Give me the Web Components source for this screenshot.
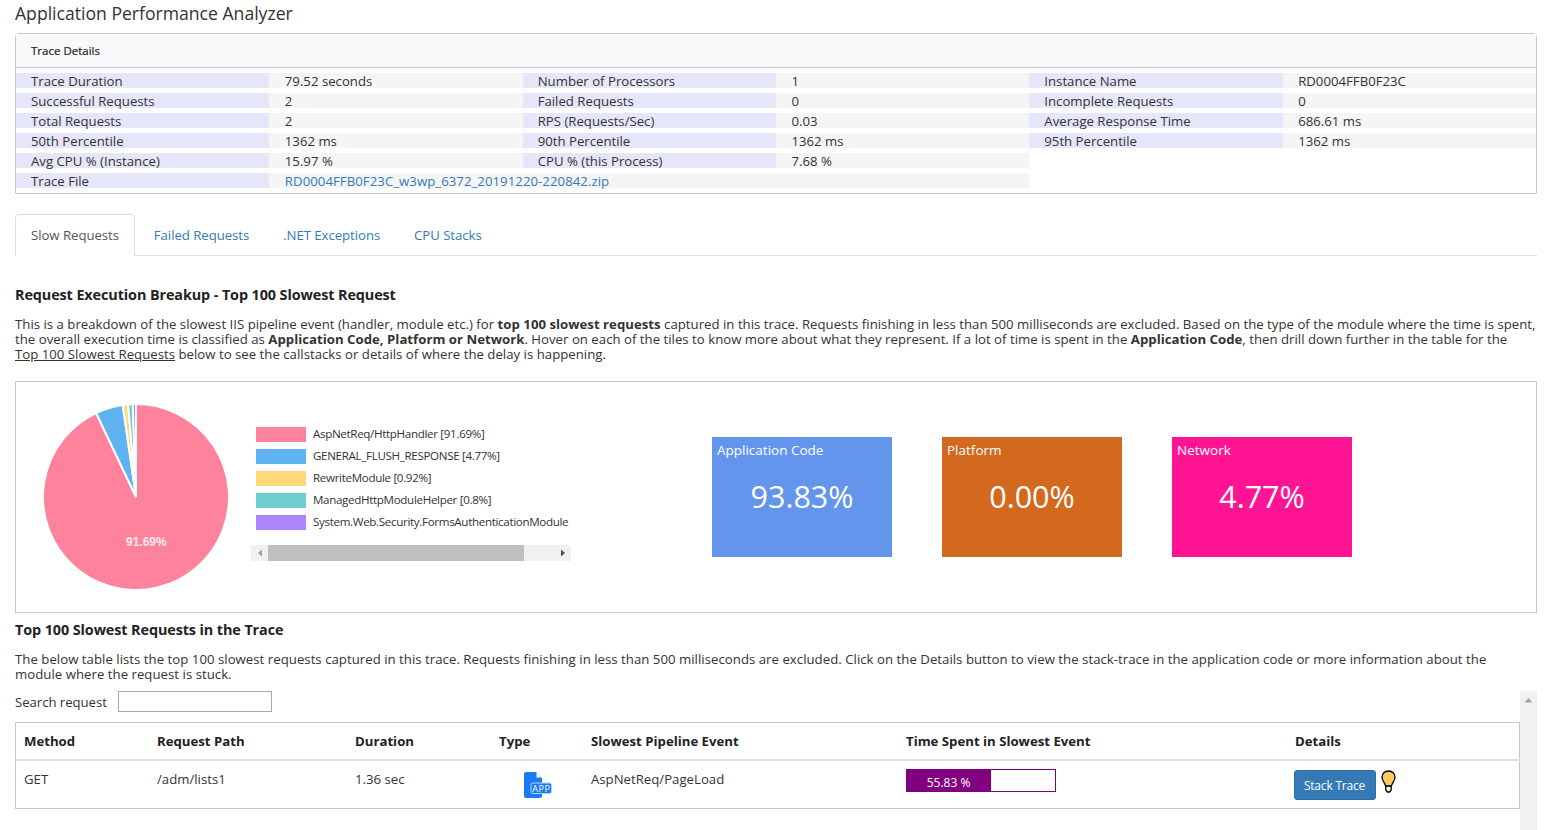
<!DOCTYPE html>
<html>
<head>
<meta charset="utf-8">
<title>Application Performance Analyzer</title>
<style>
	html, body { margin: 0; background: #fff; }
	body {
		font-family: "Open Sans", "Noto Sans", sans-serif;
		font-size: 13.2px;
		line-height: 15px;
		color: #333;
	}
	apa-page { height: 830px; overflow: hidden; }
	page-section u { white-space: nowrap; }
</style>
</head>
<body>
<apa-page>
	<trace-details></trace-details>
	<tab-bar></tab-bar>
	<page-section heading="Request Execution Breakup - Top 100 Slowest Request">
		This is a breakdown of the slowest IIS pipeline event (handler, module etc.) for <b>top 100 slowest requests</b> captured in this trace. Requests finishing in less than 500 milliseconds are excluded. Based on the type of the module where the time is spent, the overall execution time is classified as <b>Application Code, Platform or Network</b>. Hover on each of the tiles to know more about what they represent. If a lot of time is spent in the <b>Application Code</b>, then drill down further in the table for the <u>Top 100 Slowest Requests</u> below to see the callstacks or details of where the delay is happening.
	</page-section>
	<breakup-chart>
		<metric-tile label="Application Code" value="93.83%" color="#6495ed"></metric-tile>
		<metric-tile label="Platform" value="0.00%" color="#d2691e"></metric-tile>
		<metric-tile label="Network" value="4.77%" color="#ff1493"></metric-tile>
	</breakup-chart>
	<page-section class="second" heading="Top 100 Slowest Requests in the Trace">
		The below table lists the top 100 slowest requests captured in this trace. Requests finishing in less than 500 milliseconds are excluded. Click on the Details button to view the stack-trace in the application code or more information about the module where the request is stuck.
	</page-section>
	<requests-table></requests-table>
</apa-page>

<script>
(function() {
	class ApaPage extends HTMLElement {
		constructor() {
			super();
			this.attachShadow({mode: "open"}).innerHTML = `
				<style>
				:host { display: block; padding: 0 18px 0 15px; }
				h1 { font-size: 17.6px; font-weight: 400; line-height: 20px; margin: 0; padding: 3px 0 10px; }
				</style>
				<h1>Application Performance Analyzer</h1>
				<slot></slot>
			`;
		}
	}

	const details = [
		["Trace Duration", "79.52 seconds", "Number of Processors", "1", "Instance Name", "RD0004FFB0F23C"],
		["Successful Requests", "2", "Failed Requests", "0", "Incomplete Requests", "0"],
		["Total Requests", "2", "RPS (Requests/Sec)", "0.03", "Average Response Time", "686.61 ms"],
		["50th Percentile", "1362 ms", "90th Percentile", "1362 ms", "95th Percentile", "1362 ms"],
		["Avg CPU % (Instance)", "15.97 %", "CPU % (this Process)", "7.68 %"]
	];

	class TraceDetails extends HTMLElement {
		constructor() {
			super();
			let cells = "";
			details.forEach(row => {
				row.forEach((text, i) => {
					cells += `<div class="${i % 2 ? "val" : "key"}">${text}</div>`;
				});
				if (row.length < 6) cells += `<div></div><div></div>`;
			});
			cells += `<div class="key">Trace File</div><div class="val wide"><a>RD0004FFB0F23C_w3wp_6372_20191220-220842.zip</a></div>`;
			this.attachShadow({mode: "open"}).innerHTML = `
				<style>
				:host { display: block; border: 1px solid #c8c8c8; border-radius: 4px 4px 0 0; }
				.head { background: #f9f9fb; border-bottom: 1px solid #c8c8c8; height: 33px; line-height: 33px; padding-left: 15px; font-size: 11.5px; font-weight: 400; color: #222; -webkit-text-stroke: 0.2px #222; }
				.grid { display: grid; grid-template-columns: repeat(6, 1fr); row-gap: 5px; padding: 5px 0; }
				.key, .val { height: 15px; line-height: 17px; padding-left: 15px; white-space: nowrap; }
				.key { background: #e6e6fa; }
				.val { background: #f5f5f5; padding-left: 15.5px; }
				.wide { grid-column: span 3; }
				a { color: #337ab7; letter-spacing: 0.05px; }
				</style>
				<div class="head">Trace Details</div>
				<div class="grid">${cells}</div>
			`;
		}
	}

	class TabBar extends HTMLElement {
		constructor() {
			super();
			this.attachShadow({mode: "open"}).innerHTML = `
				<style>
				:host { display: flex; margin-top: 20px; height: 41px; border-bottom: 1px solid #ddd; letter-spacing: -0.04px; }
				div { height: 41px; line-height: 41px; padding: 0 15px; margin-right: 3.8px; color: #337ab7; border-top: 1px solid transparent; }
				.on { color: #555; background: #fff; border: 1px solid #ddd; border-bottom: 0; border-radius: 4px 4px 0 0; margin-bottom: -1px; margin-right: 3.8px; }
				</style>
				<div class="on">Slow Requests</div>
				<div>Failed Requests</div>
				<div>.NET Exceptions</div>
				<div>CPU Stacks</div>
			`;
		}
	}

	class PageSection extends HTMLElement {
		constructor() {
			super();
			this.attachShadow({mode: "open"}).innerHTML = `
				<style>
				:host { display: block; padding-top: 29px; letter-spacing: 0.015px; }
				:host(.second) { padding: 7px 17px 0 0; letter-spacing: 0.03px; }
				h3 { margin: 0 0 12px; font-size: 14.4px; line-height: 20px; font-weight: 700; color: #222; letter-spacing: -0.1px; }
				</style>
				<h3>${this.getAttribute("heading")}</h3>
				<slot></slot>
			`;
		}
	}

	// clockwise from 12 o'clock, angles in degrees
	function slice(from, to, color) {
		const r = 93, c = 94;
		const p = a => {
			const t = (a - 90) * Math.PI / 180;
			return (c + r * Math.cos(t)).toFixed(2) + " " + (c + r * Math.sin(t)).toFixed(2);
		};
		return `<path d="M${c} ${c}L${p(from)}A${r} ${r} 0 ${to - from > 180 ? 1 : 0} 1 ${p(to)}Z" fill="${color}" stroke="#fff" stroke-width="2"/>`;
	}

	class BreakupChart extends HTMLElement {
		constructor() {
			super();
			const legend = [
				["#ff829c", "AspNetReq/HttpHandler [91.69%]"],
				["#5eb3f0", "GENERAL_FLUSH_RESPONSE [4.77%]"],
				["#ffd877", "RewriteModule [0.92%]"],
				["#6fcdcd", "ManagedHttpModuleHelper [0.8%]"],
				["#ad85fd", "System.Web.Security.FormsAuthenticationModule"]
			].map(l => `<div class="item"><i style="background:${l[0]}"></i><span>${l[1]}</span></div>`).join("");
			this.attachShadow({mode: "open"}).innerHTML = `
				<style>
				:host { display: flex; align-items: flex-start; box-sizing: border-box; height: 232px; margin-top: 19px; border: 1px solid #c8c8c8; padding-left: 26px; }
				svg.pie { display: block; margin-top: 21px; flex: none; }
				.pie text { font: 700 12px "Liberation Sans", sans-serif; fill: #fff; fill-opacity: .85; }
				.legend { width: 320px; margin: 41px 141px 0 21px; flex: none; font-size: 11.6px; letter-spacing: -0.33px; }
				.item { display: flex; align-items: center; height: 22px; padding-left: 5px; white-space: nowrap; overflow: hidden; }
				.item i { flex: none; width: 50px; height: 15px; margin-right: 7px; }
				.item span { margin-bottom: 2px; }
				.bar { display: flex; align-items: center; height: 16px; margin-top: 12px; background: #f1f1f1; }
				.bar b { flex: none; width: 17px; height: 16px; display: flex; align-items: center; justify-content: center; }
				.thumb { height: 16px; width: 256px; background: #bfbfbf; }
				.gap { flex: 1; }
				.tiles { display: flex; gap: 50px; margin-top: 55px; }
				</style>
				<svg class="pie" width="188" height="188" viewBox="0 0 188 188">
					${slice(0, 334.6, "#ff829c")}
					${slice(334.6, 351.8, "#5eb3f0")}
					${slice(351.8, 355.1, "#ffd877")}
					${slice(355.1, 358, "#6fcdcd")}
					${slice(358, 360, "#ad85fd")}
					<text x="84" y="143">91.69%</text>
				</svg>
				<div class="legend">
					${legend}
					<div class="bar">
						<b><svg width="6" height="8"><path d="M5 0.5V7.5L1 4Z" fill="#a3a3a3"/></svg></b>
						<div class="thumb"></div>
						<div class="gap"></div>
						<b><svg width="6" height="8"><path d="M1 0.5V7.5L5 4Z" fill="#505050"/></svg></b>
					</div>
				</div>
				<div class="tiles"><slot></slot></div>
			`;
		}
	}

	class MetricTile extends HTMLElement {
		constructor() {
			super();
			this.attachShadow({mode: "open"}).innerHTML = `
				<style>
				:host { display: block; width: 180px; height: 120px; box-sizing: border-box; padding: 6px 5px; color: #fff; background: ${this.getAttribute("color")}; font-size: 13.5px; }
				.value { font-size: 30.5px; line-height: 40px; text-align: center; margin-top: 18px; }
				</style>
				<div>${this.getAttribute("label")}</div>
				<div class="value">${this.getAttribute("value")}</div>
			`;
		}
	}

	class RequestsTable extends HTMLElement {
		constructor() {
			super();
			this.attachShadow({mode: "open"}).innerHTML = `
				<style>
				:host { display: flex; margin-top: 9px; height: 200px; }
				.main { width: 1505px; flex: none; }
				.search { display: flex; align-items: center; height: 21px; margin-bottom: 10px; }
				.search span { margin-top: 2px; letter-spacing: -0.05px; }
				.search input { box-sizing: border-box; width: 154px; height: 21px; margin: 0 0 0 11.5px; padding: 0; border: 1px solid #a9a9a9; background: #fff; }
				table { width: 1505px; table-layout: fixed; border-collapse: collapse; border: 1px solid #c8c8c8; }
				th { text-align: left; height: 36px; padding: 0 8px; border-bottom: 2px solid #ddd; font-weight: 700; font-size: 13.2px; color: #222; }
				th:not(:first-child), td.t:not(:first-child) { padding-left: 8.5px; }
				td { box-sizing: border-box; height: 47px; padding: 8px; vertical-align: top; }
				td.t { padding-top: 11px; }
				.type { padding: 0; }
				.type svg { display: block; margin: 11px 0 0 33px; }
				.type text { font: 9px "Open Sans", sans-serif; fill: #fff; letter-spacing: 0.5px; }
				.progress { width: 148px; height: 21px; border: 1px solid #800080; }
				.progress div { width: 84px; height: 21px; background: #800080; color: #fff; font-size: 12px; line-height: 26px; text-align: center; }
				.detail { display: flex; align-items: flex-start; padding-top: 1px; margin-left: -1px; }
				button { width: 82px; height: 30px; padding: 0; border: 1px solid #2e6da4; border-radius: 3px; background: #337ab7; color: #fff; font: 12px/30px "Open Sans", sans-serif; letter-spacing: -0.2px; }
				.detail svg { display: block; margin-left: 5px; }
				.scroll { width: 17px; flex: none; background: #f1f1f1; display: flex; justify-content: center; padding-top: 6px; box-sizing: border-box; }
				</style>
				<div class="main">
					<div class="search"><span>Search request</span><input type="text"></div>
					<table>
						<colgroup>
							<col style="width:133px"><col style="width:198px"><col style="width:144px"><col style="width:92px"><col style="width:315px"><col style="width:389px"><col>
						</colgroup>
						<tr>
							<th>Method</th><th>Request Path</th><th>Duration</th><th>Type</th><th>Slowest Pipeline Event</th><th>Time Spent in Slowest Event</th><th>Details</th>
						</tr>
						<tr>
							<td class="t">GET</td>
							<td class="t">/adm/lists1</td>
							<td class="t">1.36 sec</td>
							<td class="type">
								<svg width="28" height="26" viewBox="0 0 28 26">
									<path d="M2 0H12L18 6V24A2 2 0 0 1 16 26H2A2 2 0 0 1 0 24V2A2 2 0 0 1 2 0Z" fill="#1a7cf5"/>
									<path d="M12.5 0.5L17.5 5.5H12.5Z" fill="#fff"/>
									<rect x="7" y="11" width="20.5" height="10.5" rx="2" fill="#1a7cf5" stroke="#b5d4fb" stroke-width="1"/>
									<text x="8.3" y="19.6">APP</text>
								</svg>
							</td>
							<td class="t">AspNetReq/PageLoad</td>
							<td><div class="progress"><div>55.83 %</div></div></td>
							<td><div class="detail">
								<button>Stack Trace</button>
								<svg width="15" height="23" viewBox="0 0 15 23">
									<path d="M7.5 1C3.6 1 1 3.8 1 7.2C1 10.2 3.8 12.8 4.6 16H10.4C11.2 12.8 14 10.2 14 7.2C14 3.8 11.4 1 7.5 1Z" fill="#ffc864" stroke="#000" stroke-width="1.3"/>
									<path d="M4.8 16.2H10.2V20L8.6 22H6.4L4.8 20Z" fill="#fff" stroke="#000" stroke-width="1.3"/>
								</svg>
							</div></td>
						</tr>
					</table>
				</div>
				<div class="scroll"><svg width="9" height="6"><path d="M0.5 5.5H8.5L4.5 1Z" fill="#a3a3a3"/></svg></div>
			`;
		}
	}

	customElements.define("apa-page", ApaPage);
	customElements.define("trace-details", TraceDetails);
	customElements.define("tab-bar", TabBar);
	customElements.define("page-section", PageSection);
	customElements.define("breakup-chart", BreakupChart);
	customElements.define("metric-tile", MetricTile);
	customElements.define("requests-table", RequestsTable);
})();
</script>
</body>
</html>
